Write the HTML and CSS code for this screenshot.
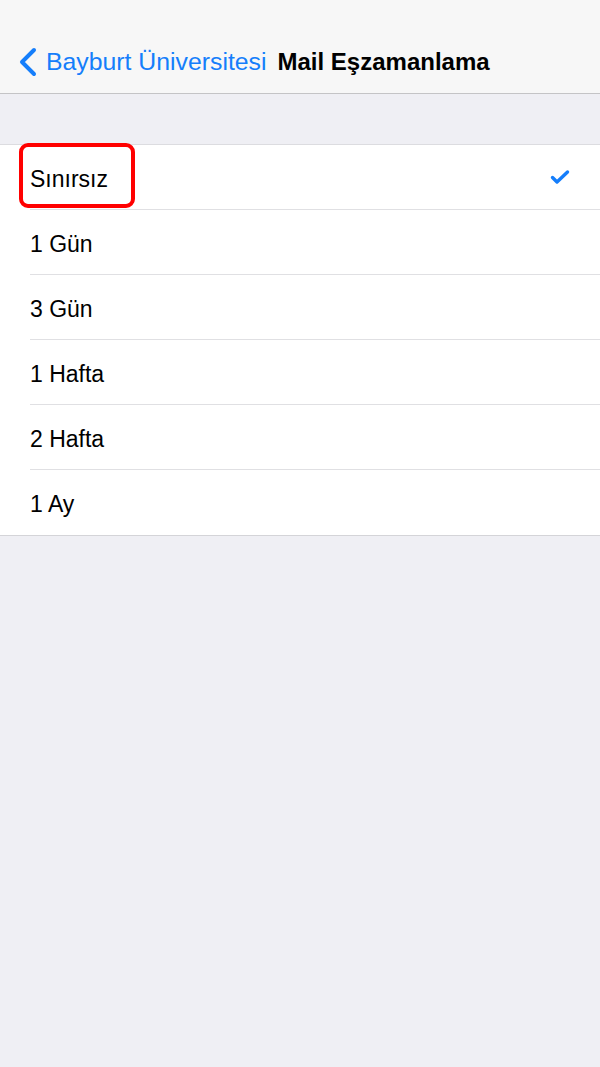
FILE: index.html
```html
<!DOCTYPE html>
<html lang="tr">
<head>
    <meta charset="UTF-8">
    <meta name="viewport" content="width=device-width, initial-scale=1.0">
    <title>Mail Eşzamanlama</title>
    <link rel="stylesheet" href="styles.css">
</head>
<body>
    <div class="navbar">
        <a class="back" href="#">
            <svg class="chevron" width="20" height="30" viewBox="0 0 20 30">
                <path d="M16 3 L4 15 L16 27" fill="none" stroke="#157efb" stroke-width="4" stroke-linecap="round" stroke-linejoin="round"/>
            </svg>
            <span>Bayburt Üniversitesi</span>
        </a>
        <span class="title">Mail Eşzamanlama</span>
    </div>

    <div class="spacer"></div>

    <ul class="list">
        <li class="row selected">
            <span class="label">Sınırsız</span>
            <svg class="check" width="20" height="16" viewBox="0 0 20 16">
                <path d="M2.5 8.5 L7 13 L17.5 3" fill="none" stroke="#157efb" stroke-width="3.4" stroke-linecap="round" stroke-linejoin="round"/>
            </svg>
        </li>
        <li class="row"><span class="label">1 Gün</span></li>
        <li class="row"><span class="label">3 Gün</span></li>
        <li class="row"><span class="label">1 Hafta</span></li>
        <li class="row"><span class="label">2 Hafta</span></li>
        <li class="row"><span class="label">1 Ay</span></li>
    </ul>
</body>
</html>
```

FILE: styles.css
```css
/* Genel */
body {
    background-color: #efeff4;
    color: #000;
    font-family: "Liberation Sans", Arial, sans-serif;
    margin: 0;
    padding: 0;
    min-height: 1067px;
}

/* Barra de navegação */
.navbar {
    display: flex;
    align-items: center;
    box-sizing: border-box;
    height: 94px;
    padding: 30px 0 0 18px;
    background-color: #f7f7f7;
    border-bottom: 1px solid #c4c4c6;
}

.back {
    display: flex;
    align-items: center;
    color: #157efb;
    text-decoration: none;
    font-size: 24.8px;
    margin-right: 11px;
}

.chevron {
    margin-right: 8px;
}

.title {
    font-size: 24px;
    font-weight: bold;
}

.spacer {
    height: 50px;
}

/* Lista */
.list {
    list-style: none;
    margin: 0;
    padding: 0;
    background-color: #fff;
    border-top: 1px solid #dcdce0;
    border-bottom: 1px solid #d4d4d8;
}

.row {
    position: relative;
    display: flex;
    align-items: center;
    justify-content: space-between;
    box-sizing: border-box;
    height: 65px;
    margin-left: 30px;
    padding-top: 4px;
    padding-right: 30px;
    border-bottom: 1px solid #e0e0e3;
    font-size: 23px;
}

.row:last-child {
    border-bottom: none;
}

/* Caixa vermelha de destaque */
.selected::before {
    content: "";
    position: absolute;
    left: -11px;
    top: -2px;
    width: 116px;
    height: 65px;
    box-sizing: border-box;
    border: 4px solid #ff0000;
    border-radius: 9px;
}

.check {
    margin-top: -4px;
}
```
